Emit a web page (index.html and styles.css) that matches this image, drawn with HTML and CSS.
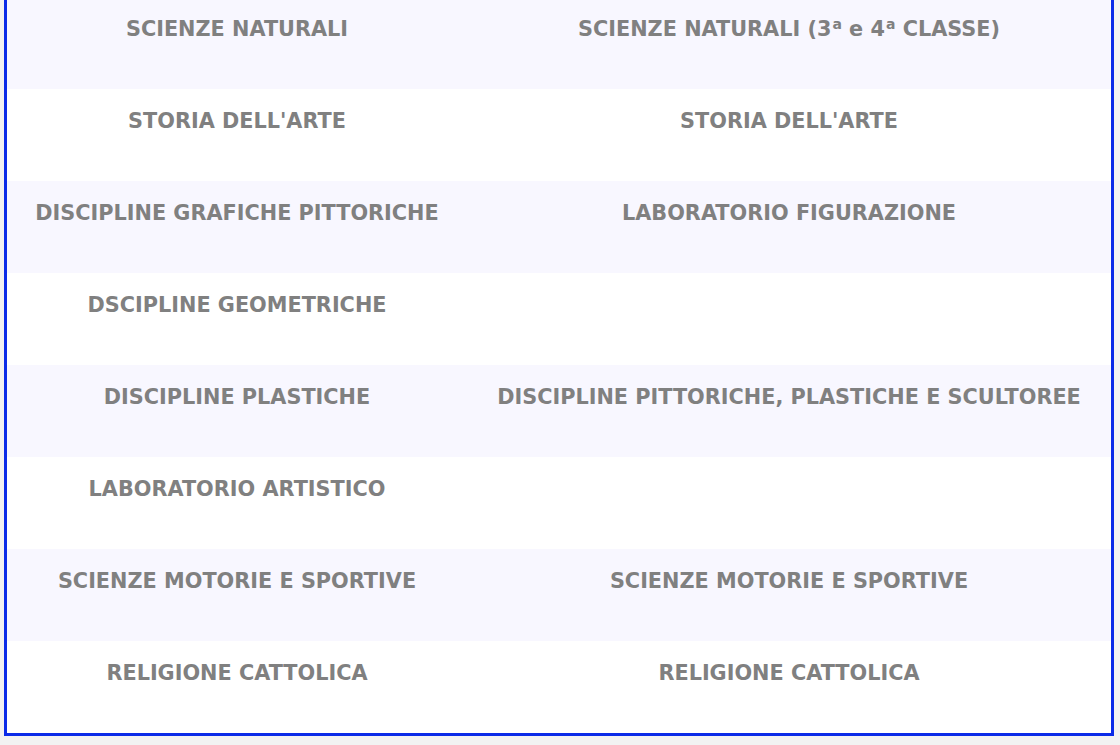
FILE: index.html
```html
<!DOCTYPE html>
<html lang="it">
<head>
<meta charset="utf-8">
<title>Materie</title>
<link rel="stylesheet" href="styles.css">
</head>
<body>
<div class="frame">
  <div class="table">
    <div class="row alt"><div class="cell">SCIENZE NATURALI</div><div class="cell">SCIENZE NATURALI (3<span class="ord">a</span> e 4<span class="ord">a</span> CLASSE)</div></div>
    <div class="row"><div class="cell">STORIA DELL'ARTE</div><div class="cell">STORIA DELL'ARTE</div></div>
    <div class="row alt"><div class="cell">DISCIPLINE GRAFICHE PITTORICHE</div><div class="cell">LABORATORIO FIGURAZIONE</div></div>
    <div class="row"><div class="cell">DSCIPLINE GEOMETRICHE</div><div class="cell"></div></div>
    <div class="row alt"><div class="cell">DISCIPLINE PLASTICHE</div><div class="cell">DISCIPLINE PITTORICHE, PLASTICHE E SCULTOREE</div></div>
    <div class="row"><div class="cell">LABORATORIO ARTISTICO</div><div class="cell"></div></div>
    <div class="row alt"><div class="cell">SCIENZE MOTORIE E SPORTIVE</div><div class="cell">SCIENZE MOTORIE E SPORTIVE</div></div>
    <div class="row"><div class="cell">RELIGIONE CATTOLICA</div><div class="cell">RELIGIONE CATTOLICA</div></div>
  </div>
</div>
</body>
</html>
```
FILE: styles.css
```css
html, body {
  margin: 0;
  padding: 0;
  background: #f2f2f2;
  overflow: hidden;
}
body {
  padding: 0 6px 0 4px;
}
.frame {
  margin-top: -6px;
  border: 3px solid #0a2be8;
  background: #ffffff;
}
.table {
  display: flex;
  flex-direction: column;
}
.row {
  display: grid;
  grid-template-columns: 460px 1fr;
  height: 92px;
  background: #ffffff;
}
.row.alt {
  background: #f8f7ff;
}
.cell {
  font-family: "DejaVu Sans", Verdana, sans-serif;
  font-weight: bold;
  font-size: 20.8px;
  color: #808080;
  text-align: center;
  padding-top: 20px;
  line-height: 24px;
  white-space: nowrap;
}
.ord {
  font-size: 14px;
  font-weight: 600;
  vertical-align: 7px;
  line-height: 0;
  margin-left: 1px;
}
```
